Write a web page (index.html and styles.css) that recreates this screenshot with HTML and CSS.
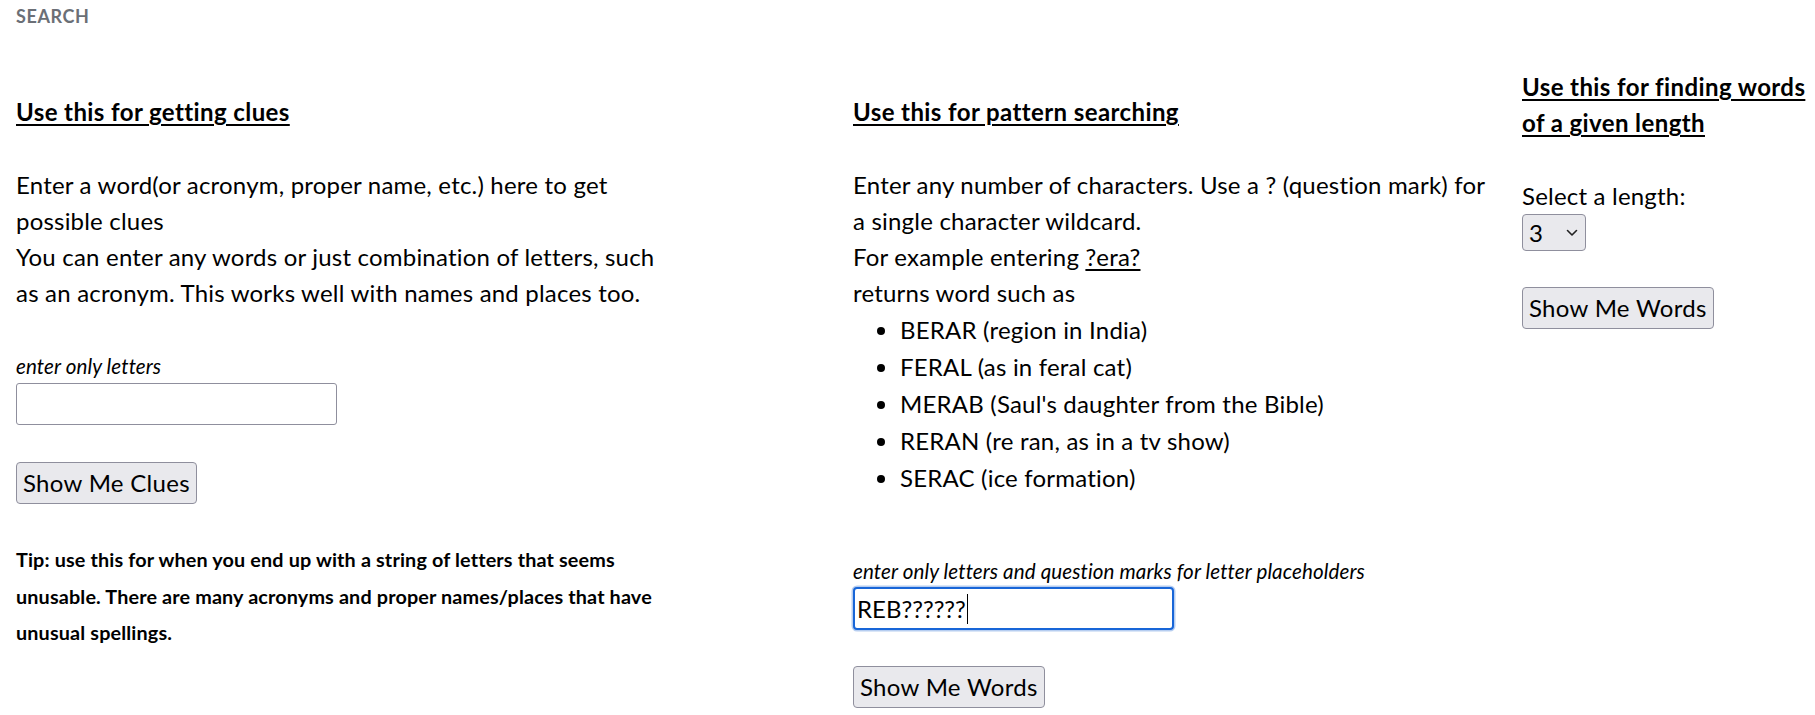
FILE: index.html
```html
<!DOCTYPE html>
<html lang="en">
<head>
<meta charset="utf-8">
<title>Search</title>
<link rel="stylesheet" href="styles.css">
</head>
<body>
<div class="page">
  <div class="page-title">SEARCH</div>
  <div class="row">
    <section class="col col-clues">
      <h2 class="col-heading">Use this for getting clues</h2>
      <p class="para">Enter a word(or acronym, proper name, etc.) here to get possible clues<br>You can enter any words or just combination of letters, such as an acronym. This works well with names and places too.</p>
      <label class="hint hint-clues" for="clue">enter only letters</label>
      <input class="text-input" id="clue" type="text">
      <button class="btn btn-gap" type="button">Show Me Clues</button>
      <p class="tip">Tip: use this for when you end up with a string of letters that seems unusable. There are many acronyms and proper names/places that have unusual spellings.</p>
    </section>
    <section class="col col-pattern">
      <h2 class="col-heading">Use this for pattern searching</h2>
      <p class="para">Enter any number of characters. Use a ? (question mark) for a single character wildcard.<br>For example entering <u>?era?</u><br>returns word such as</p>
      <ul class="examples">
        <li>BERAR (region in India)</li>
        <li>FERAL (as in feral cat)</li>
        <li>MERAB (Saul's daughter from the Bible)</li>
        <li>RERAN (re ran, as in a tv show)</li>
        <li>SERAC (ice formation)</li>
      </ul>
      <label class="hint hint-pattern" for="pattern">enter only letters and question marks for letter placeholders</label>
      <div class="input-wrap">
        <input class="text-input is-focused" id="pattern" type="text" value="REB??????">
        <span class="caret"></span>
      </div>
      <button class="btn btn-gap2" type="button">Show Me Words</button>
    </section>
    <section class="col col-length">
      <h2 class="col-heading">Use this for finding words of a given length</h2>
      <p class="para select-label">Select a length:</p>
      <div class="select-wrap">
        <select class="select">
          <option>3</option><option>4</option><option>5</option><option>6</option><option>7</option>
        </select>
        <svg class="chev" width="12" height="8" viewBox="0 0 12 8"><path d="M1.5 1.5 L6 6 L10.5 1.5" fill="none" stroke="#222" stroke-width="1.6" stroke-linecap="round" stroke-linejoin="round"/></svg>
      </div>
      <button class="btn btn-gap2" type="button">Show Me Words</button>
    </section>
  </div>
</div>
</body>
</html>
```
FILE: styles.css
```css
html, body {
  margin: 0;
  padding: 0;
  background: #fff;
}
body {
  font-family: Lato, "Open Sans", sans-serif;
  color: #000;
  overflow: hidden;
}
.page {
  padding-left: 16px;
}
.page-title {
  font-size: 18px;
  font-weight: 700;
  color: #6b6f76;
  line-height: 32px;
  letter-spacing: 0.6px;
}
.row {
  display: grid;
  grid-template-columns: 837px 669px 1fr;
  margin-top: 37px;
  align-items: start;
}
.col {
  display: flex;
  flex-direction: column;
  align-items: flex-start;
  font-size: 24px;
  line-height: 36px;
  letter-spacing: 0.2px;
}
.col-clues { padding-top: 25px; max-width: 660px; }
.col-pattern { padding-top: 25px; max-width: 645px; }
.col-heading {
  margin: 0;
  font-size: 24px;
  line-height: 36px;
  font-weight: 700;
  letter-spacing: 0.4px;
  text-decoration: underline;
  text-underline-offset: 3px;
  text-decoration-thickness: 1.5px;
}
.para {
  margin: 37px 0 0;
}
.para u {
  text-underline-offset: 3px;
}
.examples {
  margin: 0;
  padding-left: 47px;
}
.examples li {
  line-height: 37px;
}
.hint {
  display: block;
  font-size: 20.6px;
  font-style: italic;
  line-height: 24px;
  letter-spacing: 0.1px;
}
.hint-clues { margin-top: 43px; }
.hint-pattern { margin-top: 63px; }
.text-input {
  box-sizing: border-box;
  width: 321px;
  height: 42px;
  margin-top: 5px;
  padding: 0 3px;
  border: 1px solid #8f8f9d;
  border-radius: 3px;
  font-family: inherit;
  font-size: 24px;
  color: #000;
  background: #fff;
  outline: none;
}
.input-wrap {
  position: relative;
  margin-top: 4px;
}
.input-wrap .text-input { margin-top: 0; height: 43px; }
.text-input.is-focused {
  border: 2px solid #1866d8;
  border-radius: 4px;
  box-shadow: 0 0 0 1.5px #b6cdf0;
  padding: 0 2px;
}
.caret {
  position: absolute;
  left: 114px;
  top: 7px;
  width: 1px;
  height: 30px;
  background: #000;
}
.btn {
  box-sizing: border-box;
  height: 42px;
  padding: 0 6px;
  border: 1px solid #8f8f9d;
  border-radius: 4px;
  background: #e9e9ed;
  color: #000;
  font-family: inherit;
  font-size: 24px;
  line-height: 40px;
  letter-spacing: 0.3px;
}
.btn-gap { margin-top: 37px; }
.btn-gap2 { margin-top: 36px; }
.tip {
  margin: 37px 0 0;
  font-size: 19.8px;
  font-weight: 700;
  line-height: 36.5px;
  letter-spacing: 0.15px;
}
.select-label { margin-top: 37px; }
.select-wrap {
  position: relative;
}
.select {
  -webkit-appearance: none;
  appearance: none;
  box-sizing: border-box;
  width: 64px;
  height: 37px;
  padding: 0 0 0 6px;
  border: 1px solid #8f8f9d;
  border-radius: 4px;
  background: #e9e9ed;
  color: #000;
  font-family: inherit;
  font-size: 24px;
}
.chev {
  position: absolute;
  left: 44px;
  top: 15px;
  pointer-events: none;
}
```
